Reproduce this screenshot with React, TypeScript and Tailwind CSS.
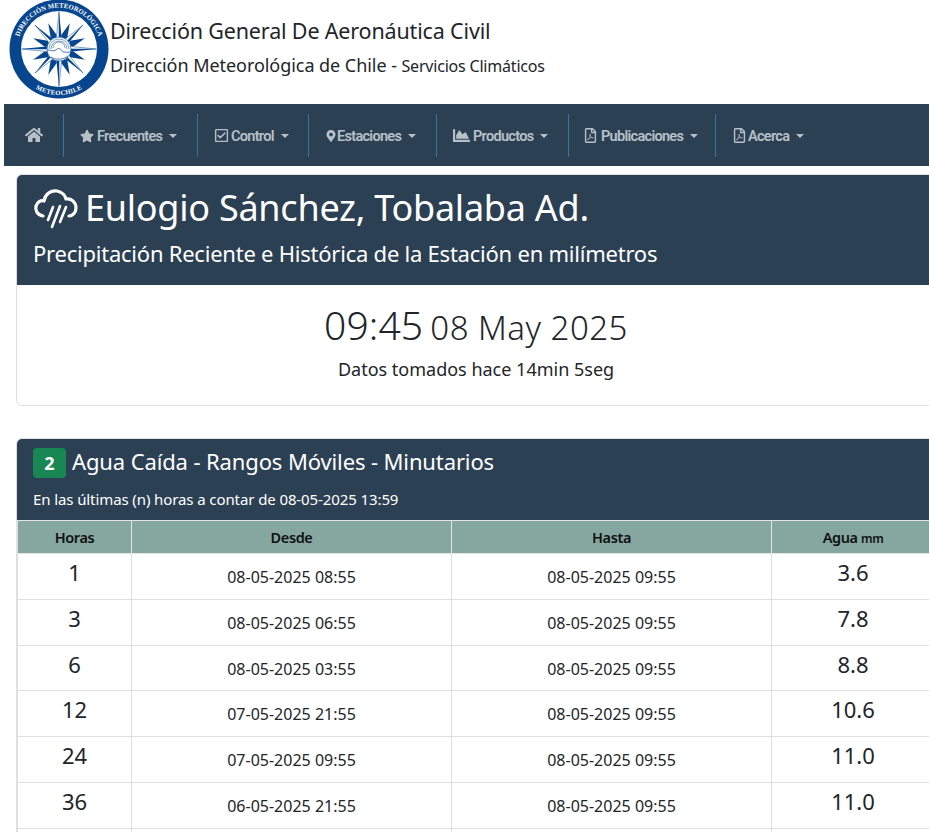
import { FaHome, FaStar, FaRegCheckSquare, FaMapMarkerAlt, FaChartArea, FaRegFilePdf } from 'react-icons/fa';
import type { ReactNode } from 'react';

function Logo() {
  const cx = 59;
  const cy = 49;
  const pt = (deg: number, r: number) => {
    const a = (deg * Math.PI) / 180;
    return `${cx + Math.sin(a) * r},${cy - Math.cos(a) * r}`;
  };
  const small = [22.5, 67.5, 112.5, 157.5, 202.5, 247.5, 292.5, 337.5];
  const long: { deg: number; r: number }[] = [
    { deg: 45, r: 34 },
    { deg: 135, r: 34 },
    { deg: 225, r: 34 },
    { deg: 315, r: 34 },
    { deg: 0, r: 37.5 },
    { deg: 90, r: 37.5 },
    { deg: 180, r: 37.5 },
    { deg: 270, r: 37.5 },
  ];
  return (
    <svg width="102" height="100" viewBox="7 0 102 100" className="shrink-0">
      <defs>
        <path id="logo-top" d="M 18.1 56.2 A 41.5 41.5 0 1 1 99.9 56.2" />
        <path id="logo-bottom" d="M 29.4 84.2 A 46 46 0 0 0 88.6 84.2" />
      </defs>
      <circle cx={cx} cy={cy} r="49.5" fill="#07468f" />
      <circle cx={cx} cy={cy} r="38" fill="#fff" />
      <text fontFamily="'Liberation Serif', serif" fontWeight="700" fontSize="6.8" fill="#fff">
        <textPath href="#logo-top" startOffset="50%" textAnchor="middle">DIRECCIÓN METEOROLÓGICA</textPath>
      </text>
      <text fontFamily="'Liberation Serif', serif" fontWeight="700" fontSize="6.6" fill="#fff" letterSpacing="0.3">
        <textPath href="#logo-bottom" startOffset="50%" textAnchor="middle">METEOCHILE</textPath>
      </text>
      {small.map((deg) => (
        <polygon key={deg} points={`${pt(deg, 28)} ${pt(deg - 14, 14)} ${pt(deg, 10)} ${pt(deg + 14, 14)}`} fill="#07468f" />
      ))}
      {long.map((s) => (
        <g key={s.deg}>
          <polygon points={`${pt(s.deg, s.r)} ${pt(s.deg - 14, 11)} ${cx},${cy}`} fill="#fff" stroke="#07468f" strokeWidth="0.5" />
          <polygon points={`${pt(s.deg, s.r)} ${pt(s.deg + 14, 11)} ${cx},${cy}`} fill="#07468f" />
        </g>
      ))}
      <circle cx={cx} cy={cy} r="12" fill="#fff" stroke="#07468f" strokeWidth="0.6" />
      <path d="M 49 49 A 10 10 0 0 1 69 49 M 51 49 A 8 8 0 0 1 67 49 M 53 48 A 6 6 0 0 1 65 48" fill="none" stroke="#07468f" strokeWidth="0.5" />
      <path d="M 47 50 C 51 50 53 52 56 50 C 58 47 61 49 62 51 C 64 53 67 52 71 52 M 51 57 C 55 60 63 60 68 56" fill="none" stroke="#07468f" strokeWidth="0.7" />
    </svg>
  );
}

function RainCloud() {
  return (
    <svg width="46" height="44" viewBox="0 0 46 44" fill="none" stroke="#fff" strokeWidth="3.2" strokeLinecap="round" strokeLinejoin="round" className="shrink-0">
      <path d="M10 30 C4 29 2 24 3 20 C4 16 8 14 11 15 C12 8 18 4 24 5 C29 6 32 9 33 13 C38 12 43 16 43 22 C43 27 39 30 36 30" />
      <path d="M20 21 L15 34" strokeWidth="2.6" />
      <path d="M27 20 L19 41" strokeWidth="2.6" />
      <path d="M33 21 L27 36" strokeWidth="2.6" />
    </svg>
  );
}

function NavItem({ icon, label, width }: { icon: ReactNode; label: string; width: string }) {
  return (
    <div className={`${width} h-[43px] pt-[4px] border-l border-[#31798f] flex items-center pl-4 gap-[3px] font-['Roboto',sans-serif] text-[14.5px] font-semibold text-[#b8c0c7] tracking-[-0.7px] [&>svg]:-mt-[3px]`}>
      {icon}
      <span>{label}</span>
      <span className="ml-[4px] -mt-[2px] w-0 h-0 border-x-[4px] border-x-transparent border-t-[4px] border-t-[#b8c0c7]" />
    </div>
  );
}

const rows = [
  ['1', '08-05-2025 08:55', '3.6'],
  ['3', '08-05-2025 06:55', '7.8'],
  ['6', '08-05-2025 03:55', '8.8'],
  ['12', '07-05-2025 21:55', '10.6'],
  ['24', '07-05-2025 09:55', '11.0'],
  ['36', '06-05-2025 21:55', '11.0'],
];

export default function App() {
  return (
    <div className="w-[929px] h-[832px] overflow-hidden bg-white text-[#212529] font-['Noto_Sans','Open_Sans',sans-serif]">
      <header className="h-[104px] flex pl-[7px]">
        <Logo />
        <div className="ml-[1px] pt-[15px]">
          <div className="text-[21.5px] leading-[32px] tracking-[-0.16px]">Dirección General De Aeronáutica Civil</div>
          <div className="mt-[2px] text-[18px] leading-[32px] tracking-[-0.05px]">
            Dirección Meteorológica de Chile - <span className="text-[16px] tracking-[-0.2px]">Servicios Climáticos</span>
          </div>
        </div>
      </header>

      <nav className="ml-1 h-[62px] w-[925px] bg-[#2c4054] flex items-center">
        <div className="w-[59px] pl-[21px] text-[#b8c0c7] text-[18px]">
          <FaHome />
        </div>
        <NavItem width="w-[134px]" label="Frecuentes" icon={<FaStar className="text-[14px]" />} />
        <NavItem width="w-[111px]" label="Control" icon={<FaRegCheckSquare className="text-[15px] -mr-px" />} />
        <NavItem width="w-[128px]" label="Estaciones" icon={<FaMapMarkerAlt className="text-[12px] -mr-[3px]" />} />
        <NavItem width="w-[132px]" label="Productos" icon={<FaChartArea className="text-[17px]" />} />
        <NavItem width="w-[147px]" label="Publicaciones" icon={<FaRegFilePdf className="text-[15px] -ml-[2px]" />} />
        <NavItem width="w-[120px]" label="Acerca" icon={<FaRegFilePdf className="text-[15px] -mr-[2px]" />} />
      </nav>

      <section className="mt-[8px] ml-4 w-[920px] h-[232px] border border-[#dfdfdf] rounded-md overflow-hidden">
        <div className="h-[110px] bg-[#2c4054] text-white pl-4 pr-4 pt-[7px]">
          <div className="flex items-center gap-[6px] h-[52px]">
            <RainCloud />
            <h1 className="text-[36px] tracking-[-0.25px] leading-[52px]">Eulogio Sánchez, Tobalaba Ad.</h1>
          </div>
          <p className="mt-[3px] text-[22px] leading-[32px] tracking-[-0.23px]">Precipitación Reciente e Histórica de la Estación en milímetros</p>
        </div>
        <div className="text-center pt-[16px]">
          <div className="leading-[48px] font-light">
            <span className="text-[39px] tracking-[0.1px]">09:45</span> <span className="ml-[3px] text-[33px] tracking-[0.5px]">08 May 2025</span>
          </div>
          <p className="-mt-[2px] text-[18px] leading-[26px]">Datos tomados hace 14min 5seg</p>
        </div>
      </section>

      <section className="mt-[32px] ml-4 w-[920px] border border-[#dfdfdf] rounded-md overflow-hidden">
        <div className="h-[81px] bg-[#2c4054] text-white px-4 pt-[8px]">
          <div className="flex items-center gap-[6px] h-[32px]">
            <span className="w-[33px] h-[30px] rounded bg-[#198754] flex items-center justify-center text-[18px] font-bold">2</span>
            <h2 className="mb-[4px] text-[22px] tracking-[-0.12px]">Agua Caída - Rangos Móviles - Minutarios</h2>
          </div>
          <p className="mt-[8px] text-[15px] leading-[24px] tracking-[-0.1px]">En las últimas (n) horas a contar de 08-05-2025 13:59</p>
        </div>
        <table className="w-full table-fixed border-collapse text-center">
          <colgroup>
            <col className="w-[114px]" />
            <col className="w-[320px]" />
            <col className="w-[320px]" />
            <col />
          </colgroup>
          <thead>
            <tr className="h-[33px] bg-[#85a79f] text-[14.5px] text-[#111] tracking-[-0.4px]">
              <th className="pt-[2px] border border-[#e3e3e3] font-semibold">Horas</th>
              <th className="pt-[2px] border border-[#e3e3e3] font-semibold">Desde</th>
              <th className="pt-[2px] border border-[#e3e3e3] font-semibold">Hasta</th>
              <th className="pt-[2px] border border-[#e3e3e3] font-semibold">Agua <span className="text-[12px]">mm</span></th>
            </tr>
          </thead>
          <tbody>
            {rows.map((row) => (
              <tr key={row[0]} className="border-b border-[#dfdfdf]">
                <td className="h-[45.8px] border-x border-[#dfdfdf] align-top pt-[2px] text-[22px] leading-[33px]">{row[0]}</td>
                <td className="border-x border-[#dfdfdf] align-top pt-[11px] text-[16px] leading-[24px]">{row[1]}</td>
                <td className="border-x border-[#dfdfdf] align-top pt-[11px] text-[16px] leading-[24px]">08-05-2025 09:55</td>
                <td className="border-x border-[#dfdfdf] align-top pt-[2px] text-[22px] leading-[33px]">{row[2]}</td>
              </tr>
            ))}
            <tr>
              <td className="h-[46px] border-x border-[#dfdfdf]" />
              <td className="border-x border-[#dfdfdf]" />
              <td className="border-x border-[#dfdfdf]" />
              <td className="border-x border-[#dfdfdf]" />
            </tr>
          </tbody>
        </table>
      </section>
    </div>
  );
}
